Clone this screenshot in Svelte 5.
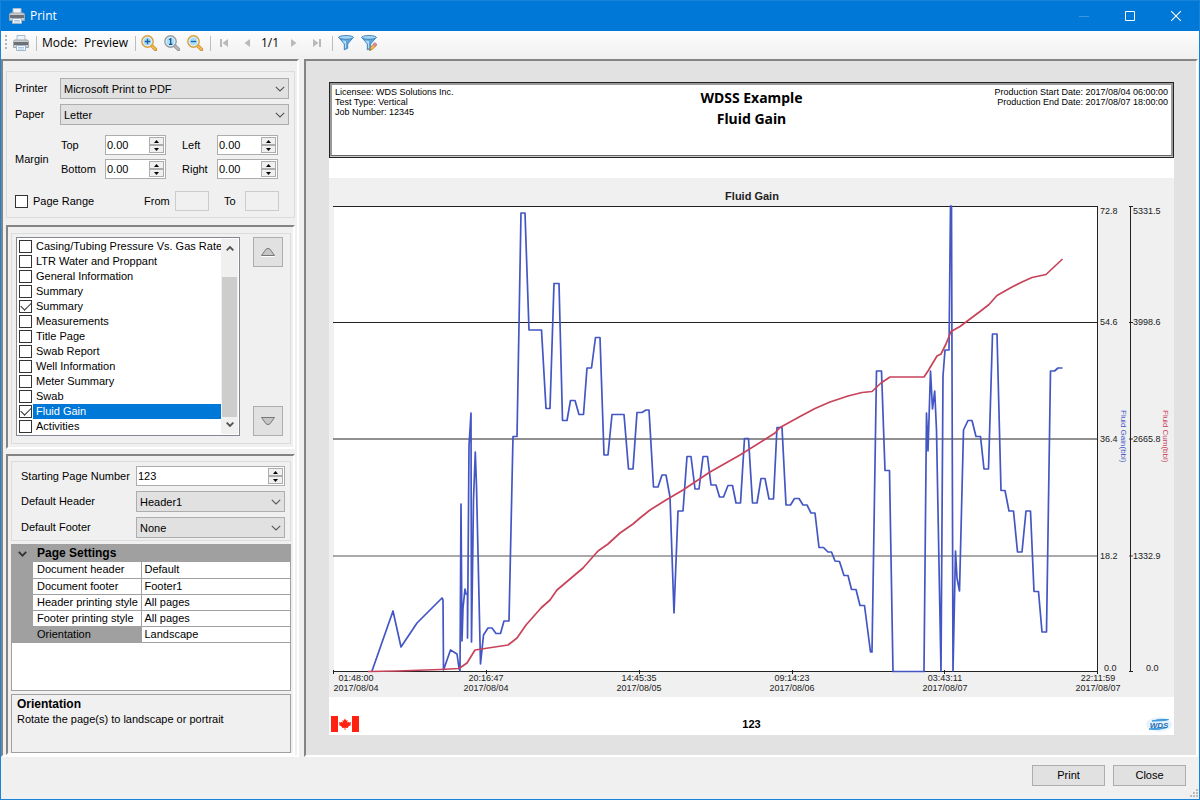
<script lang="ts">
  type Item = { name: string; checked: boolean };

  let printer = $state('Microsoft Print to PDF');
  let paper = $state('Letter');
  let margins = $state({ top: '0.00', left: '0.00', bottom: '0.00', right: '0.00' });
  let usePageRange = $state(false);
  let startPage = $state('123');
  let header = $state('Header1');
  let footer = $state('None');
  let selected = $state(11);

  let items: Item[] = $state([
    { name: 'Casing/Tubing Pressure Vs. Gas Rate', checked: false },
    { name: 'LTR Water and Proppant', checked: false },
    { name: 'General Information', checked: false },
    { name: 'Summary', checked: false },
    { name: 'Summary', checked: true },
    { name: 'Measurements', checked: false },
    { name: 'Title Page', checked: false },
    { name: 'Swab Report', checked: false },
    { name: 'Well Information', checked: false },
    { name: 'Meter Summary', checked: false },
    { name: 'Swab', checked: false },
    { name: 'Fluid Gain', checked: true },
    { name: 'Activities', checked: false }
  ]);

  const settings = [
    ['Document header', 'Default'],
    ['Document footer', 'Footer1'],
    ['Header printing style', 'All pages'],
    ['Footer printing style', 'All pages'],
    ['Orientation', 'Landscape']
  ];

  function move(step: number) {
    const to = selected + step;
    if (to < 0 || to >= items.length) return;
    [items[selected], items[to]] = [items[to], items[selected]];
    selected = to;
  }

  function stepMargin(side: keyof typeof margins, by: number) {
    margins[side] = Math.max(0, Number(margins[side]) + by).toFixed(2);
  }

  function stepPage(by: number) {
    startPage = String(Math.max(1, Number(startPage) + by));
  }

  const gridY = [206.5, 322.5, 439, 556, 671.5];
  const valueTicks = [
    { y: 214, gain: '72.8', cum: '5331.5' },
    { y: 325, gain: '54.6', cum: '3998.6' },
    { y: 442, gain: '36.4', cum: '2665.8' },
    { y: 559, gain: '18.2', cum: '1332.9' }
  ];
  const timeTicks = [
    { x: 333, at: 356, date: '2017/08/04', time: '01:48:00' },
    { x: 486, at: 486, date: '2017/08/04', time: '20:16:47' },
    { x: 639, at: 639, date: '2017/08/05', time: '14:45:35' },
    { x: 792, at: 792, date: '2017/08/06', time: '09:14:23' },
    { x: 944, at: 945, date: '2017/08/07', time: '03:43:11' },
    { x: 1097, at: 1098, date: '2017/08/07', time: '22:11:59' }
  ];

  const fluidGain =
    '372,671 393,611 401,647 417,623 442,598 443,600 443.5,670 450.5,650 457,654 459,668 460,671 461,504 ' +
    '462,641 463,608 465,589 466,594 467.5,594 467.5,638 469,446 471,413 471.5,642 473.5,500 475.3,452 476.5,486 480.5,664 ' +
    '483.5,635 488,628 492,628 496,633.5 500.5,633.5 504,621 509,621 513,436.5 517,436.5 521,213 525,213 ' +
    '529,330 541.5,330 546,408.5 550,408.5 554,283.5 559,283.5 562.5,420.5 567,420.5 570.5,400.5 575,400.5 ' +
    '579,414.5 583.5,414.5 587,368 591.5,368 595.5,337.5 600,337.5 604,455 608,455 612,414.5 624,414.5 ' +
    '628.5,469 633,469 637,412.5 642,412.5 646,410 649,410 653.5,487 658,487 662,475 666,475 670,497 674,613 ' +
    '678,511 683,511 687,456.5 691,456.5 695,489 699,489 703,456.5 707.5,456.5 711,485 716,485 719.5,497 ' +
    '723.5,497 728,485.5 732.5,485.5 736,503 740.5,503 744.5,438.5 748.5,438.5 752.5,503 757,503 761,478.5 ' +
    '765,478.5 769,499 773.5,499 777,427.5 782,427.5 786,505 790.5,505 794.5,498.5 799,498.5 803,505 807,505 ' +
    '811,513 815,513 819,547.5 823.5,547.5 828,552 831.5,552 835,561 839.5,561.5 844,575.5 848,575.5 ' +
    '851.5,589.5 856,589.5 860,605.5 864.5,605.5 870.5,652 872,652 876.5,371 881.5,371 885,470.5 889.5,470.5 ' +
    '893,671.5 924,671.5 926.5,413 928,451 930.5,371 932.5,409 934.7,391 936.5,430 941,671 943,376 945,350 ' +
    '949,350 950.5,206 951.5,206 953,671 955.5,551 957,578 959.5,591 963.5,430 968,420.5 972,420.5 976,436.5 ' +
    '980.5,436.5 984,469 988.5,469 992.5,334 997,334 1001,490.5 1005,490.5 1009,511 1013.5,511 1017.5,552 ' +
    '1022,552 1026,511 1030.5,511 1034,591.5 1038.5,591.5 1042,632 1046.5,632 1050.5,371 1054.5,371 1058,368 1062.5,368';

  const fluidCum =
    '368,671.5 397,671 440,669.5 459,668.5 467,663 475,650 508,645 517,638 526,625 541,608 550,600 557,590 ' +
    '583,568 598,551 608,544 620,533 633,524 640,518 650,510 666,500 683,490 710,472 740,455 775,433 780,427.5 ' +
    '800,416.5 815,408.5 830,402 848,396 862,392.5 872,391.5 881,383 890,377 924,377 928,371 937,356 941,354 ' +
    '946,344 951,331.5 960,326.5 970,319 980,311.5 989,304.5 997,295.5 1012,287 1022,282 1032,277.5 1046,274.5 1062.5,259';
</script>

{#snippet printerIcon()}
  <svg class="icon" viewBox="0 0 16 16" aria-hidden="true">
    <path d="M4 0.5h8v5H4z" fill="#eef3f8" stroke="#a9bccf" />
    <path d="M0.5 6.5q0-1.5 1.5-1.5h12q1.5 0 1.5 1.5v6h-15z" fill="#c9ccd0" stroke="#a3a6aa" />
    <path d="M1 7h14v3H1z" fill="#6d7074" />
    <path d="M3.5 10.5h9v5h-9z" fill="#fafcff" stroke="#9cb4cc" />
    <path d="M5 12.5h6M5 14h6" stroke="#a9c7e6" />
  </svg>
{/snippet}

{#snippet zoomIcon(kind: string)}
  <svg class="icon" viewBox="0 0 16 16" aria-hidden="true">
    <path d="M10.5 10.5l4 4" stroke={kind === 'one' ? '#8d9196' : '#c58a2c'} stroke-width="3.4" stroke-linecap="round" />
    <path d="M10.5 10.5l3.8 3.8" stroke={kind === 'one' ? '#b4b8bd' : '#f5b94d'} stroke-width="2" stroke-linecap="round" />
    <circle cx="6.5" cy="6.5" r="5.6" fill="#bfe6fa" stroke={kind === 'one' ? '#9a9da2' : '#dca03c'} stroke-width="1.6" />
    <circle cx="6.5" cy="6.5" r="4.4" fill="#a5dcf8" stroke="#eefaff" stroke-width="0.8" />
    {#if kind === 'in'}<path d="M3.8 6.5h5.4M6.5 3.8v5.4" stroke="#1b62a5" stroke-width="1.3" />{/if}
    {#if kind === 'out'}<path d="M3.8 6.5h5.4" stroke="#1b62a5" stroke-width="1.3" />{/if}
    {#if kind === 'one'}<path d="M5.2 4.8l1.5-1v5.2M5 9.3h3.4" fill="none" stroke="#1b4f86" stroke-width="1.2" />{/if}
  </svg>
{/snippet}

{#snippet filterIcon(edit: boolean)}
  <svg class="icon" viewBox="0 0 16 16" aria-hidden="true">
    <path d="M0.8 2.5L6.3 9v5.8l3.4-1.6V9l5.5-6.5z" fill="#5ba7de" stroke="#3d7fb8" stroke-width="0.9" />
    <path d="M4 5.5L7 9v4.5l1-.5V6z" fill="#b4dcf7" />
    <ellipse cx="8" cy="2.4" rx="7.3" ry="1.9" fill="#a4d4f3" stroke="#3d7fb8" stroke-width="0.9" />
    {#if edit}
      <path d="M8.5 15.5l1-3.2 4-4 2 2-4 4z" fill="#f6b64a" stroke="#a8742a" stroke-width="0.7" />
      <path d="M12 9.3l1.8-1.6q1.6.2 2 2l-1.8 1.6z" fill="#e58aa8" stroke="#a8607a" stroke-width="0.5" />
      <path d="M8.4 15.6l.6-1.6 1 1z" fill="#444" />
    {/if}
  </svg>
{/snippet}

{#snippet navIcon(d: string)}
  <svg class="nav" viewBox="0 0 10 10" aria-hidden="true"><path {d} fill="#b9b9b9" /></svg>
{/snippet}

{#snippet chevron()}
  <svg class="chevron" viewBox="0 0 10 6" aria-hidden="true">
    <path d="M0.8 0.8L5 5l4.2-4.2" fill="none" stroke="#555" stroke-width="1.1" />
  </svg>
{/snippet}

{#snippet stepButtons(name: string, step: (by: number) => void)}
  <span class="steps">
    <button aria-label="Increase {name}" onclick={() => step(1)}>
      <svg viewBox="0 0 5 3"><path d="M0 3L2.5 0 5 3z" /></svg>
    </button>
    <button aria-label="Decrease {name}" onclick={() => step(-1)}>
      <svg viewBox="0 0 5 3"><path d="M0 0l2.5 3L5 0z" /></svg>
    </button>
  </span>
{/snippet}

{#snippet marginField(side: 'top' | 'left' | 'bottom' | 'right', label: string)}
  <label for="margin-{side}">{label}</label>
  <span class="spinner">
    <input id="margin-{side}" type="text" bind:value={margins[side]} />
    {@render stepButtons(side, (by) => stepMargin(side, by * 0.1))}
  </span>
{/snippet}

<div class="window">
  <header class="titlebar">
    {@render printerIcon()}
    <h1>Print</h1>
    <div class="caption-buttons">
      <button aria-label="Minimize" disabled>
        <svg viewBox="0 0 10 10"><path d="M0 5.5h10" stroke="#3c97e0" /></svg>
      </button>
      <button aria-label="Maximize">
        <svg viewBox="0 0 10 10"><path d="M0.5 0.5h9v9h-9z" fill="none" stroke="#fff" /></svg>
      </button>
      <button aria-label="Close window">
        <svg viewBox="0 0 10 10"><path d="M0 0l10 10M10 0L0 10" stroke="#fff" stroke-width="1.1" /></svg>
      </button>
    </div>
  </header>

  <div class="toolbar">
    <svg class="grip" viewBox="0 0 2 16" aria-hidden="true">
      <path d="M0 1h2M0 5h2M0 9h2M0 13h2" stroke="#b4b4b4" stroke-width="2" />
    </svg>
    <button aria-label="Print document">{@render printerIcon()}</button>
    <span class="sep"></span>
    <span class="mode">Mode:</span>
    <button class="preview">Preview</button>
    <span class="sep"></span>
    <button aria-label="Zoom in">{@render zoomIcon('in')}</button>
    <button aria-label="Actual size">{@render zoomIcon('one')}</button>
    <button aria-label="Zoom out">{@render zoomIcon('out')}</button>
    <span class="sep"></span>
    <button aria-label="First page" disabled>{@render navIcon('M1 1h2v8H1zM9 1v8L3.5 5z')}</button>
    <button aria-label="Previous page" disabled>{@render navIcon('M8 1v8L2.5 5z')}</button>
    <span class="pages">1/1</span>
    <button aria-label="Next page" disabled>{@render navIcon('M2 1v8l5.5-4z')}</button>
    <button aria-label="Last page" disabled>{@render navIcon('M7 1h2v8H7zM1 1v8l5.5-4z')}</button>
    <span class="sep"></span>
    <button aria-label="Filter">{@render filterIcon(false)}</button>
    <button aria-label="Edit filter">{@render filterIcon(true)}</button>
  </div>

  <main>
    <aside class="sidebar sunken">
      <section class="group printer-group">
        <div class="row">
          <label for="printer">Printer</label>
          <span class="select">
            <select id="printer" bind:value={printer}><option>Microsoft Print to PDF</option></select>
            {@render chevron()}
          </span>
        </div>
        <div class="row">
          <label for="paper">Paper</label>
          <span class="select">
            <select id="paper" bind:value={paper}><option>Letter</option><option>Legal</option></select>
            {@render chevron()}
          </span>
        </div>
        <div class="margins">
          <span class="margin-title">Margin</span>
          <div class="margin-grid">
            {@render marginField('top', 'Top')}
            {@render marginField('left', 'Left')}
            {@render marginField('bottom', 'Bottom')}
            {@render marginField('right', 'Right')}
          </div>
        </div>
        <div class="range">
          <label class="range-check"><input type="checkbox" bind:checked={usePageRange} />Page Range</label>
          <label class="from" for="from">From</label>
          <input id="from" type="text" disabled={!usePageRange} />
          <label class="to" for="to">To</label>
          <input id="to" type="text" disabled={!usePageRange} />
        </div>
      </section>

      <section class="sunken block">
        <div class="group pages-group">
          <div class="list">
            <ul>
              {#each items as item, i}
                <li class:selected={i === selected}>
                  <label>
                    <input type="checkbox" bind:checked={item.checked} onchange={() => (selected = i)} />
                    <span>{item.name}</span>
                  </label>
                </li>
              {/each}
            </ul>
            <div class="scrollbar">
              <svg viewBox="0 0 8 5"><path d="M0.7 4.3L4 1l3.3 3.3" fill="none" stroke="#505050" stroke-width="1.8" /></svg>
              <div class="track"><div class="thumb"></div></div>
              <svg viewBox="0 0 8 5"><path d="M0.7 0.7L4 4l3.3-3.3" fill="none" stroke="#505050" stroke-width="1.8" /></svg>
            </div>
          </div>
          <div class="movers">
            <button aria-label="Move up" onclick={() => move(-1)}>
              <svg viewBox="0 0 16 10"><path d="M1.5 8.5h13L10 2.2Q8 0.6 6 2.2z" fill="#c6c6c6" stroke="#777" /><path d="M1 9.5h14" stroke="#fff" /></svg>
            </button>
            <button aria-label="Move down" onclick={() => move(1)}>
              <svg viewBox="0 0 16 10"><path d="M1.5 1.5h13L10 7.8Q8 9.4 6 7.8z" fill="#c6c6c6" stroke="#777" /></svg>
            </button>
          </div>
        </div>
      </section>

      <section class="sunken block settings">
        <div class="group defaults">
          <label for="start-page">Starting Page Number</label>
          <span class="spinner">
            <input id="start-page" type="text" bind:value={startPage} />
            {@render stepButtons('page number', stepPage)}
          </span>
          <label for="header">Default Header</label>
          <span class="select">
            <select id="header" bind:value={header}><option>Header1</option><option>None</option></select>
            {@render chevron()}
          </span>
          <label for="footer">Default Footer</label>
          <span class="select">
            <select id="footer" bind:value={footer}><option>None</option><option>Footer1</option></select>
            {@render chevron()}
          </span>
        </div>
        <div class="properties">
          <table>
            <colgroup>
              <col class="col-gutter" />
              <col class="col-name" />
              <col />
            </colgroup>
            <thead>
              <tr>
                <th class="gutter">
                  <svg viewBox="0 0 8 5"><path d="M0.7 0.7L4 4l3.3-3.3" fill="none" stroke="#333" stroke-width="1.6" /></svg>
                </th>
                <th colspan="2">Page Settings</th>
              </tr>
            </thead>
            <tbody>
              {#each settings as [name, value]}
                <tr class:current={name === 'Orientation'}>
                  <td class="gutter"></td>
                  <td class="name">{name}</td>
                  <td>{value}</td>
                </tr>
              {/each}
            </tbody>
          </table>
        </div>
        <div class="help">
          <h2>Orientation</h2>
          <p>Rotate the page(s) to landscape or portrait</p>
        </div>
      </section>
    </aside>

    <section class="pane sunken">
      <article class="page">
        <div class="page-header">
          <div class="page-header-inner">
            <p>Licensee: WDS Solutions Inc.<br />Test Type: Vertical<br />Job Number: 12345</p>
            <h2>WDSS Example<br />Fluid Gain</h2>
            <p class="dates">Production Start Date: 2017/08/04 06:00:00<br />Production End Date: 2017/08/07 18:00:00</p>
          </div>
        </div>

        <svg class="chart" viewBox="329 178 845 519" role="img" aria-label="Fluid Gain">
          <rect x="329" y="178" width="845" height="519" fill="#f0f0f0" />
          <rect x="334" y="206" width="763" height="465" fill="#fff" />
          <text class="chart-title" x="752" y="200">Fluid Gain</text>
          {#each gridY as y, i}
            <path d="M333 {y}h765M1129 {y}h4" class="axis" class:soft={i === 3} />
          {/each}
          <path d="M1097.5 206v468M1130.5 206v466" class="axis" />
          {#each timeTicks as tick}
            <path d="M{tick.x + 0.5} 670v4" class="axis" />
            <text class="tick mid" x={tick.at} y="681">{tick.time}</text>
            <text class="tick mid" x={tick.at} y="691">{tick.date}</text>
          {/each}
          {#each valueTicks as tick}
            <text class="tick" x="1100" y={tick.y}>{tick.gain}</text>
            <text class="tick" x="1133" y={tick.y}>{tick.cum}</text>
          {/each}
          <text class="tick" x="1104" y="671">0.0</text>
          <text class="tick" x="1146" y="671">0.0</text>
          <polyline points={fluidGain} class="gain" />
          <polyline points={fluidCum} class="cum" />
          <text class="series blue" transform="translate(1121 410) rotate(90)">Fluid Gain(bbl)</text>
          <text class="series red" transform="translate(1163 410) rotate(90)">Fluid Cum(bbl)</text>
        </svg>

        <footer class="page-footer">
          <svg class="flag" viewBox="0 0 28 16" role="img" aria-label="Canada">
            <path d="M0 0h28v16H0z" fill="#fff" />
            <path d="M0 0h7v16H0zM21 0h7v16h-7z" fill="#f21" />
            <path d="M14 2.5l1.3 2.2 1.3-.6-.4 2.7 1.6-1.1.5.9 2-.3-.9 2 .6.6-3.2 2.2.2 1-2.6-.3V14h-.8v-2.2l-2.6.3.2-1L8 8.9l.6-.6-.9-2 2 .3.5-.9 1.6 1.1-.4-2.7 1.3.6z" fill="#f21" />
          </svg>
          <strong>{startPage}</strong>
          <svg class="logo" viewBox="0 0 26 15" role="img" aria-label="WDS">
            <ellipse cx="13" cy="7.5" rx="13" ry="7.2" fill="#e6f3fc" />
            <path d="M6 4Q13 1.5 22.5 2.5 20 4 6 4zM3 12q10 1.5 18-1.5Q13 11 3 12z" fill="#55aee8" stroke="#3b98dc" />
            <text x="13" y="11">WDS</text>
          </svg>
        </footer>
      </article>
    </section>
  </main>

  <footer class="actions">
    <button>Print</button>
    <button>Close</button>
    <svg class="resize" viewBox="0 0 8 8" aria-hidden="true">
      <path d="M6 0h2v2H6zM3 3h2v2H3zM6 3h2v2H6zM0 6h2v2H0zM3 6h2v2H3zM6 6h2v2H6z" fill="#bdbdbd" />
    </svg>
  </footer>
</div>

<style>
  :global(body) {
    margin: 0;
  }

  .window,
  .window * {
    box-sizing: border-box;
  }

  .window {
    min-height: 100vh;
    display: flex;
    flex-direction: column;
    border: 1px solid #1883d7;
    background: #f0f0f0;
    color: #000;
    font-family: 'Liberation Sans', Arial, sans-serif;
    font-size: 11px;
    line-height: 13px;
  }

  button,
  input,
  select {
    font: inherit;
    color: inherit;
    margin: 0;
    padding: 0;
  }

  h1,
  h2,
  p,
  ul {
    margin: 0;
    padding: 0;
  }

  svg {
    display: block;
  }

  .icon {
    width: 16px;
    height: 16px;
  }

  /* title bar */
  .titlebar {
    display: flex;
    align-items: center;
    gap: 5px;
    height: 30px;
    padding-left: 8px;
    background: #0078d7;
    color: #fff;
  }

  .titlebar h1 {
    flex: 1;
    font: 400 12px/16px 'Open Sans', 'Noto Sans', sans-serif;
  }

  .caption-buttons {
    display: flex;
  }

  .caption-buttons button {
    display: grid;
    place-items: center;
    width: 46px;
    height: 30px;
    border: 0;
    background: none;
  }

  .caption-buttons svg {
    width: 10px;
    height: 10px;
  }

  /* toolbar */
  .toolbar {
    display: flex;
    align-items: center;
    height: 28px;
    padding: 0 4px 4px;
    background: linear-gradient(#fdfdfd, #f0f0f0);
    font: 400 12px/16px 'Open Sans', 'Noto Sans', sans-serif;
  }

  .toolbar button {
    display: grid;
    place-items: center;
    width: 23px;
    height: 22px;
    border: 0;
    background: none;
  }

  .toolbar button.preview {
    width: 44px;
    margin: 0 3px 0 6px;
  }

  .grip {
    width: 2px;
    height: 16px;
    margin-right: 2px;
  }

  .sep {
    width: 1px;
    height: 15px;
    margin: 0 1px 0 4px;
    background: #bdbdbd;
  }

  .mode {
    width: 36px;
    margin-left: 4px;
  }

  .nav {
    width: 10px;
    height: 10px;
  }

  .pages {
    width: 24px;
    text-align: center;
  }

  /* shared frames */
  .sunken {
    border: 2px solid;
    border-color: #848484 #fff #fff #848484;
  }

  .group {
    border: 1px solid #dcdcdc;
  }

  main {
    flex: 1;
    display: flex;
    gap: 5px;
    padding-right: 1px;
  }

  .sidebar {
    flex: none;
    width: 298px;
    display: flex;
    flex-direction: column;
    padding: 10px 2px 0 3px;
  }

  /* controls */
  .select {
    display: grid;
    align-items: center;
  }

  .select select {
    grid-area: 1 / 1;
    appearance: none;
    width: 100%;
    height: 21px;
    padding: 1px 18px 0 3px;
    border: 1px solid #adadad;
    border-radius: 0;
    background: #e1e1e1;
  }

  .chevron {
    grid-area: 1 / 1;
    justify-self: end;
    width: 10px;
    height: 6px;
    margin-right: 4px;
    pointer-events: none;
  }

  .spinner {
    display: flex;
    height: 20px;
    padding: 1px;
    border: 1px solid #adadad;
    background: #fff;
  }

  .spinner input {
    flex: 1;
    min-width: 0;
    border: 0;
    outline: 0;
    background: none;
  }

  .steps {
    display: flex;
    flex-direction: column;
    width: 15px;
  }

  .steps button {
    flex: 1;
    display: grid;
    place-items: center;
    border: 1px solid #adadad;
    background: #f0f0f0;
  }

  .steps svg {
    width: 5px;
    height: 3px;
  }

  input[type='checkbox'] {
    flex: none;
    appearance: none;
    display: grid;
    place-items: center;
    width: 13px;
    height: 13px;
    border: 1px solid #333;
    background: #fff;
  }

  input[type='checkbox']:checked::before {
    content: '';
    width: 9px;
    height: 5px;
    margin-bottom: 3px;
    border: solid #333;
    border-width: 0 0 1px 1px;
    transform: rotate(-45deg);
  }

  /* printer group */
  .printer-group {
    display: flex;
    flex-direction: column;
    gap: 5px;
    padding: 6px 5px 6px 8px;
  }

  .row {
    display: grid;
    grid-template-columns: 45px 1fr;
    align-items: center;
  }

  .margins {
    display: flex;
    align-items: center;
    padding-top: 5px;
  }

  .margin-title {
    width: 46px;
    padding-top: 4px;
  }

  .margin-grid {
    display: grid;
    grid-template-columns: 44px 77px 35px 61px;
    row-gap: 4px;
    align-items: center;
  }

  .margin-grid .spinner {
    width: 61px;
  }

  .range {
    display: flex;
    align-items: center;
    padding-top: 7px;
  }

  .range-check {
    display: flex;
    align-items: center;
    gap: 5px;
    width: 129px;
  }

  .from {
    width: 31px;
  }

  .to {
    width: 21px;
    margin-left: 15px;
  }

  .range input[type='text'] {
    width: 34px;
    height: 20px;
    border: 1px solid #ccc;
    background: #f0f0f0;
  }

  .range input[type='text']:enabled {
    background: #fff;
  }

  /* page list */
  .block {
    margin-top: 7px;
    padding: 6px 2px 3px 3px;
  }

  .pages-group {
    display: flex;
    justify-content: space-between;
    padding: 3px 7px 7px 4px;
  }

  .list {
    display: flex;
    width: 224px;
    padding: 1px;
    border: 1px solid #828790;
    background: #fff;
  }

  .list ul {
    flex: 1;
    min-width: 0;
    list-style: none;
  }

  .list label {
    display: flex;
    align-items: center;
    gap: 1px;
    height: 15px;
    padding-left: 1px;
    white-space: nowrap;
  }

  .list label span {
    flex: 1;
    padding: 1px 0 1px 3px;
  }

  .selected label span {
    background: #0078d7;
    color: #fff;
  }

  .scrollbar {
    flex: none;
    display: flex;
    flex-direction: column;
    align-items: center;
    width: 17px;
    padding: 7px 1px;
    background: #f0f0f0;
  }

  .scrollbar svg {
    width: 8px;
    height: 5px;
  }

  .track {
    flex: 1;
    display: flex;
    align-items: flex-end;
    width: 15px;
    padding: 5px 0;
  }

  .thumb {
    width: 100%;
    height: 87%;
    background: #cdcdcd;
  }

  .movers {
    display: flex;
    flex-direction: column;
    justify-content: space-between;
  }

  .movers button {
    display: grid;
    place-items: center;
    width: 30px;
    height: 30px;
    border: 1px solid #adadad;
    background: #e1e1e1;
  }

  .movers svg {
    width: 16px;
    height: 10px;
  }

  /* page settings */
  .settings {
    flex: 1;
    display: flex;
    flex-direction: column;
    gap: 3px;
    margin-top: 5px;
    padding: 5px 2px 0 3px;
  }

  .defaults {
    display: grid;
    grid-template-columns: 115px minmax(0, 1fr);
    row-gap: 5px;
    align-items: center;
    padding: 4px 5px 2px 9px;
  }

  .properties {
    flex: 1;
    border: 1px solid #a0a0a0;
    background: #fff;
  }

  table {
    width: 100%;
    border-collapse: collapse;
    table-layout: fixed;
  }

  .col-gutter {
    width: 21px;
  }

  .col-name {
    width: 108px;
  }

  th {
    height: 17px;
    padding: 0 4px;
    background: #a0a0a0;
    font-size: 12px;
    text-align: left;
  }

  th.gutter {
    padding: 0 6px;
  }

  .gutter svg {
    width: 9px;
    height: 6px;
  }

  td {
    height: 16px;
    padding: 0 3px;
    border-bottom: 1px solid #a0a0a0;
    white-space: nowrap;
  }

  td.gutter {
    background: #a0a0a0;
  }

  td.name {
    padding: 0 0 0 4px;
    border-right: 1px solid #a0a0a0;
  }

  .current .name {
    background: #a0a0a0;
  }

  .help {
    height: 59px;
    padding: 2px 5px;
    border: 1px solid #a0a0a0;
  }

  .help h2 {
    font-size: 12px;
    line-height: 14px;
  }

  .help p {
    padding-top: 2px;
  }

  /* preview */
  .pane {
    flex: 1;
    min-width: 0;
    padding: 21px 22px 20px 23px;
    background: #e2e2e2;
  }

  .page {
    background: #fff;
  }

  .page-header {
    height: 76px;
    padding-bottom: 1px;
    border: 1px solid #222;
    background: #ccc;
  }

  .page-header-inner {
    display: grid;
    grid-template-columns: 1fr auto 1fr;
    height: 100%;
    padding: 2px 3px;
    border: 2px solid #999;
    border-bottom: 1px solid #666;
    background: #fff;
    font-size: 9px;
    line-height: 10px;
  }

  .page-header h2 {
    font: 700 14px/21px 'Noto Sans', 'Open Sans', sans-serif;
    text-align: center;
  }

  .dates {
    text-align: right;
  }

  .chart {
    width: 100%;
    margin-top: 20px;
  }

  .axis {
    stroke: #222;
    fill: none;
  }

  .axis.soft {
    stroke: #555;
  }

  .gain,
  .cum {
    fill: none;
    stroke-width: 1.7;
    stroke-linejoin: round;
  }

  .gain {
    stroke: #4356c4;
  }

  .cum {
    stroke: #c8435a;
  }

  .chart-title {
    font-size: 11px;
    font-weight: 700;
    text-anchor: middle;
    fill: #222;
  }

  .tick {
    font-size: 9px;
    fill: #222;
  }

  .mid {
    text-anchor: middle;
  }

  .series {
    font-size: 8px;
  }

  .blue {
    fill: #4356c4;
  }

  .red {
    fill: #c8435a;
  }

  .page-footer {
    display: grid;
    grid-template-columns: 1fr auto 1fr;
    align-items: center;
    height: 38px;
    padding: 16px 2px 0;
  }

  .flag {
    width: 28px;
    height: 16px;
  }

  .page-footer strong {
    font-size: 11px;
  }

  .logo {
    justify-self: end;
    width: 26px;
    height: 15px;
  }

  .logo text {
    font: italic 700 8px 'Liberation Sans', sans-serif;
    text-anchor: middle;
    fill: #1f6db5;
  }

  /* dialog buttons */
  .actions {
    position: relative;
    display: flex;
    justify-content: flex-end;
    gap: 8px;
    height: 42px;
    padding: 8px 13px 0;
  }

  .actions button {
    width: 73px;
    height: 21px;
    border: 1px solid #adadad;
    background: #e1e1e1;
  }

  .resize {
    position: absolute;
    right: 1px;
    bottom: 2px;
    width: 8px;
    height: 8px;
  }
</style>
